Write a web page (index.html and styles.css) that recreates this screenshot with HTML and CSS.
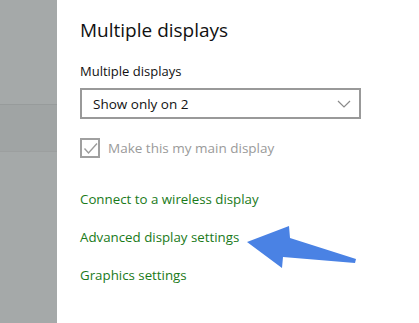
FILE: index.html
```html
<!DOCTYPE html>
<html lang="en">
<head>
  <meta charset="UTF-8" />
  <title>Multiple displays</title>
  <link rel="stylesheet" href="styles.css">
</head>
<body>
  <div class="side">
    <div class="side-band"></div>
  </div>

  <div class="panel">
    <h1 class="title">Multiple displays</h1>

    <div class="label">Multiple displays</div>
    <div class="dropdown">
      <span>Show only on 2</span>
      <svg class="chevron" width="14" height="8" viewBox="0 0 14 8">
        <polyline points="1,1 7,7 13,1" fill="none" stroke="#8a8a8a" stroke-width="1.2" />
      </svg>
    </div>

    <div class="check-row">
      <div class="checkbox">
        <svg width="15" height="15" viewBox="0 0 15 15">
          <polyline points="1.5,7.5 5.5,12 14,2.5" fill="none" stroke="#9c9c9c" stroke-width="1.4" />
        </svg>
      </div>
      <span>Make this my main display</span>
    </div>

    <div class="links">
      <a href="#">Connect to a wireless display</a>
      <a href="#">Advanced display settings</a>
      <a href="#">Graphics settings</a>
    </div>
  </div>

  <svg class="arrow" width="419" height="323" viewBox="0 0 419 323">
    <polygon points="247,242 289,226 290,238 356,259 355,263 283,257 282,268" fill="#4a82e4" />
  </svg>
</body>
</html>
```

FILE: styles.css
```css
body {
  margin: 0;
  width: 419px;
  height: 323px;
  display: flex;
  background: white;
  font-family: 'Open Sans', sans-serif;
  overflow: hidden;
  position: relative;
}

.side {
  width: 57px;
  flex-shrink: 0;
  background: #a5a9a9;
  padding-top: 104px;
}

.side-band {
  height: 46px;
  background: #a0a4a4;
  border-top: 1px solid #979b9b;
  border-bottom: 1px solid #9c9f9f;
}

.panel {
  padding-left: 23px;
  flex: 1;
}

.title {
  font-size: 19px;
  font-weight: normal;
  color: #111;
  margin: 17px 0 0 0;
  line-height: 26px;
}

.label {
  font-size: 13px;
  color: #111;
  margin-top: 19px;
  line-height: 18px;
}

.dropdown {
  box-sizing: border-box;
  width: 281px;
  height: 31px;
  margin-top: 8px;
  border: 2px solid #999;
  display: flex;
  align-items: center;
  justify-content: space-between;
  padding: 0 8px 0 11px;
  font-size: 13.5px;
  color: #111;
}

.check-row {
  display: flex;
  align-items: center;
  gap: 8px;
  margin-top: 19px;
  font-size: 13.5px;
  color: #9a9a9a;
}

.checkbox {
  width: 16px;
  height: 16px;
  border: 2px solid #a0a0a0;
  display: flex;
  align-items: center;
  justify-content: center;
}

.links {
  display: flex;
  flex-direction: column;
  gap: 18px;
  margin-top: 31px;
}

.links a {
  color: #1a7a1a;
  text-decoration: none;
  font-size: 13.3px;
  line-height: 20px;
}

.arrow {
  position: absolute;
  left: 0;
  top: 0;
}
```
